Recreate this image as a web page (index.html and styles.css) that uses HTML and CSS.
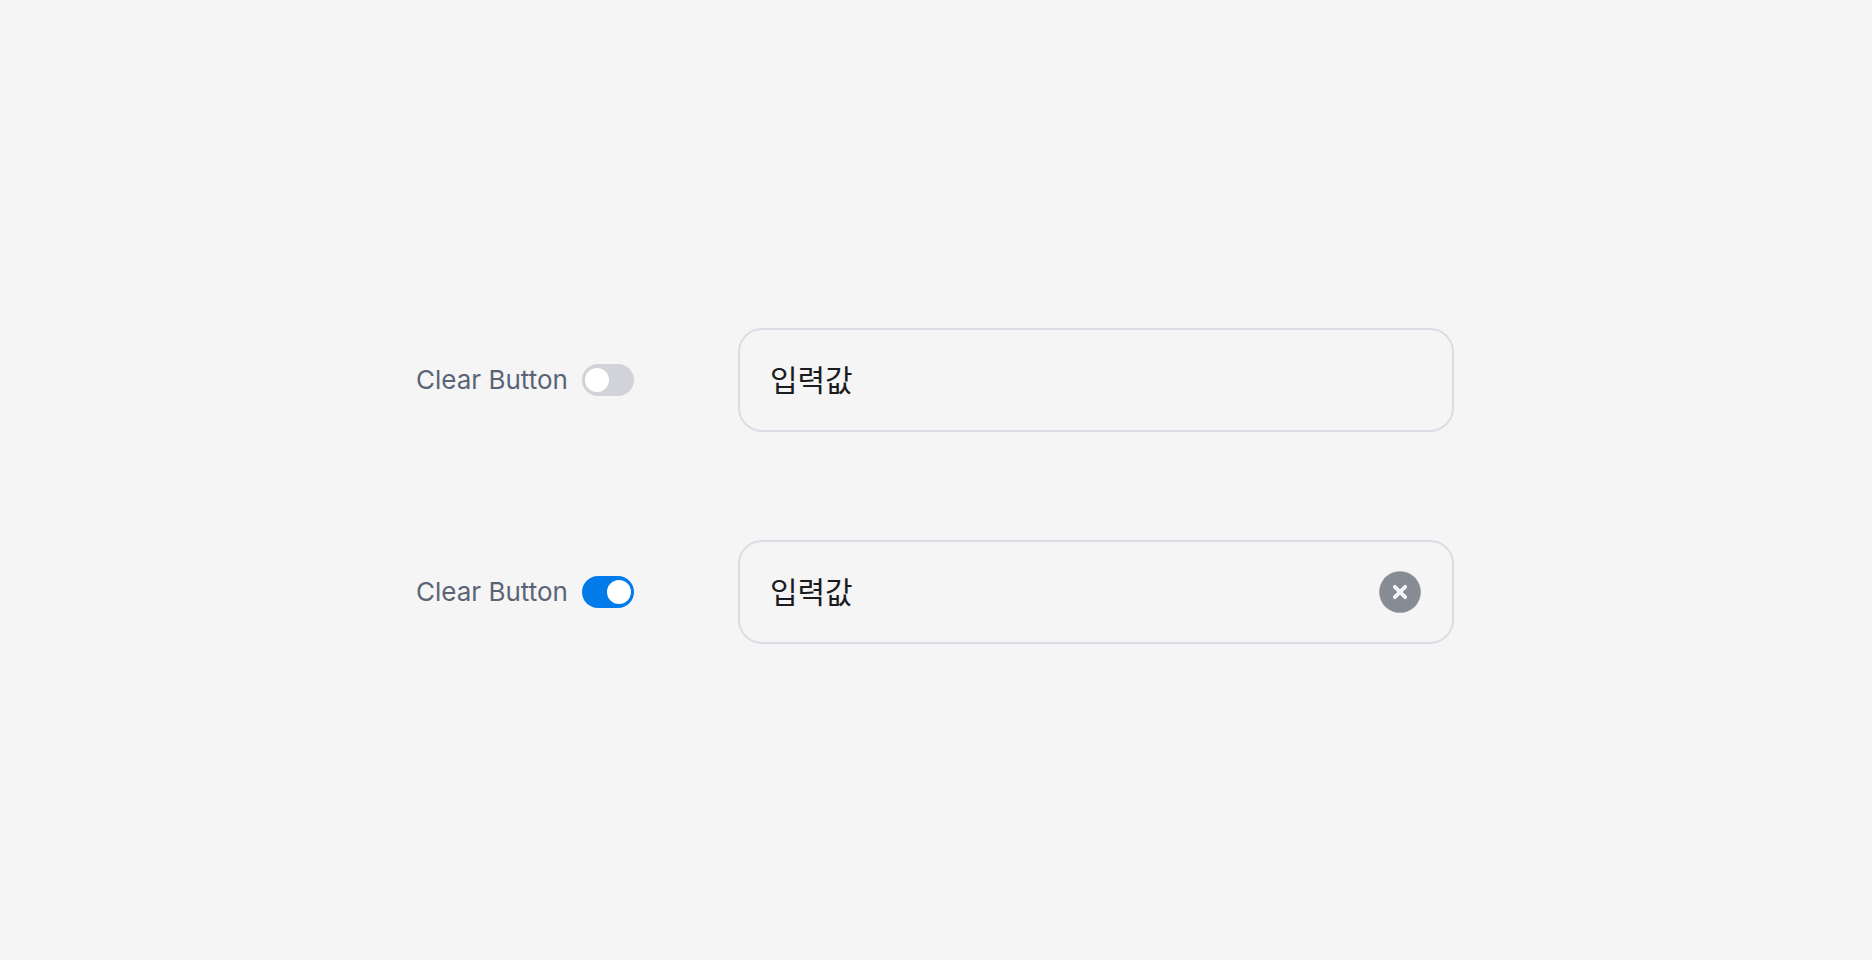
FILE: index.html
```html
<!DOCTYPE html>
<html lang="ko">
  <head>
    <meta charset="UTF-8" />
    <meta name="viewport" content="width=device-width, initial-scale=1.0" />
    <title>Clear Button</title>
    <link rel="stylesheet" href="styles.css">
  </head>
  <body>
    <main class="examples">
      <div class="example">
        <label class="option">
          Clear Button
          <input class="switch" type="checkbox" role="switch" />
        </label>
        <div class="field">
          <input class="field-input" type="text" value="입력값" aria-label="입력값" />
        </div>
      </div>

      <div class="example">
        <label class="option">
          Clear Button
          <input class="switch" type="checkbox" role="switch" checked />
        </label>
        <div class="field">
          <input class="field-input" type="text" value="입력값" aria-label="입력값" />
          <button class="clear-btn" type="button" aria-label="Clear">
            <svg viewBox="0 0 42 42" width="42" height="42" aria-hidden="true">
              <circle cx="21" cy="21" r="20.8" fill="#878b94" />
              <path d="M15.8 15.8l10.4 10.4M26.2 15.8L15.8 26.2" fill="none" stroke="#f5f5f5" stroke-width="3.8" stroke-linecap="round" />
            </svg>
          </button>
        </div>
      </div>
    </main>
  </body>
</html>
```

FILE: styles.css
```css
* {
  box-sizing: border-box;
}

body {
  margin: 0;
  min-height: 100vh;
  padding: 12px 2px 0 0;
  display: flex;
  justify-content: center;
  align-items: center;
  font-family: Inter, 'Noto Sans CJK KR', sans-serif;
  background: #f5f5f5;
}

.examples {
  display: flex;
  flex-direction: column;
  gap: 108px;
  width: 100%;
  max-width: 1038px;
}

.example {
  display: flex;
  align-items: center;
  gap: 104px;
}

.option {
  display: flex;
  align-items: center;
  gap: 14px;
  font-size: 26px;
  line-height: 36px;
  white-space: nowrap;
  color: #5a6475;
  cursor: pointer;
}

.switch {
  appearance: none;
  display: flex;
  align-items: center;
  width: 52px;
  height: 32px;
  margin: 0;
  padding: 0 3px;
  border-radius: 16px;
  background: #d1d3d9;
  cursor: pointer;
}

.switch::before {
  content: '';
  width: 24px;
  height: 24px;
  border-radius: 50%;
  background: #fff;
}

.switch:checked {
  justify-content: flex-end;
  background: #007be9;
}

.field {
  flex: 1;
  display: flex;
  align-items: center;
  height: 104px;
  padding: 0 31px 0 30px;
  border: 2px solid #dcdce4;
  border-radius: 24px;
}

.field-input {
  flex: 1;
  min-width: 0;
  height: 48px;
  padding: 0 0 4px;
  border: 0;
  outline: 0;
  font-family: inherit;
  font-size: 30px;
  color: #1a1c20;
  background: transparent;
}

.clear-btn {
  display: flex;
  padding: 0;
  border: 0;
  background: transparent;
  cursor: pointer;
}
```
